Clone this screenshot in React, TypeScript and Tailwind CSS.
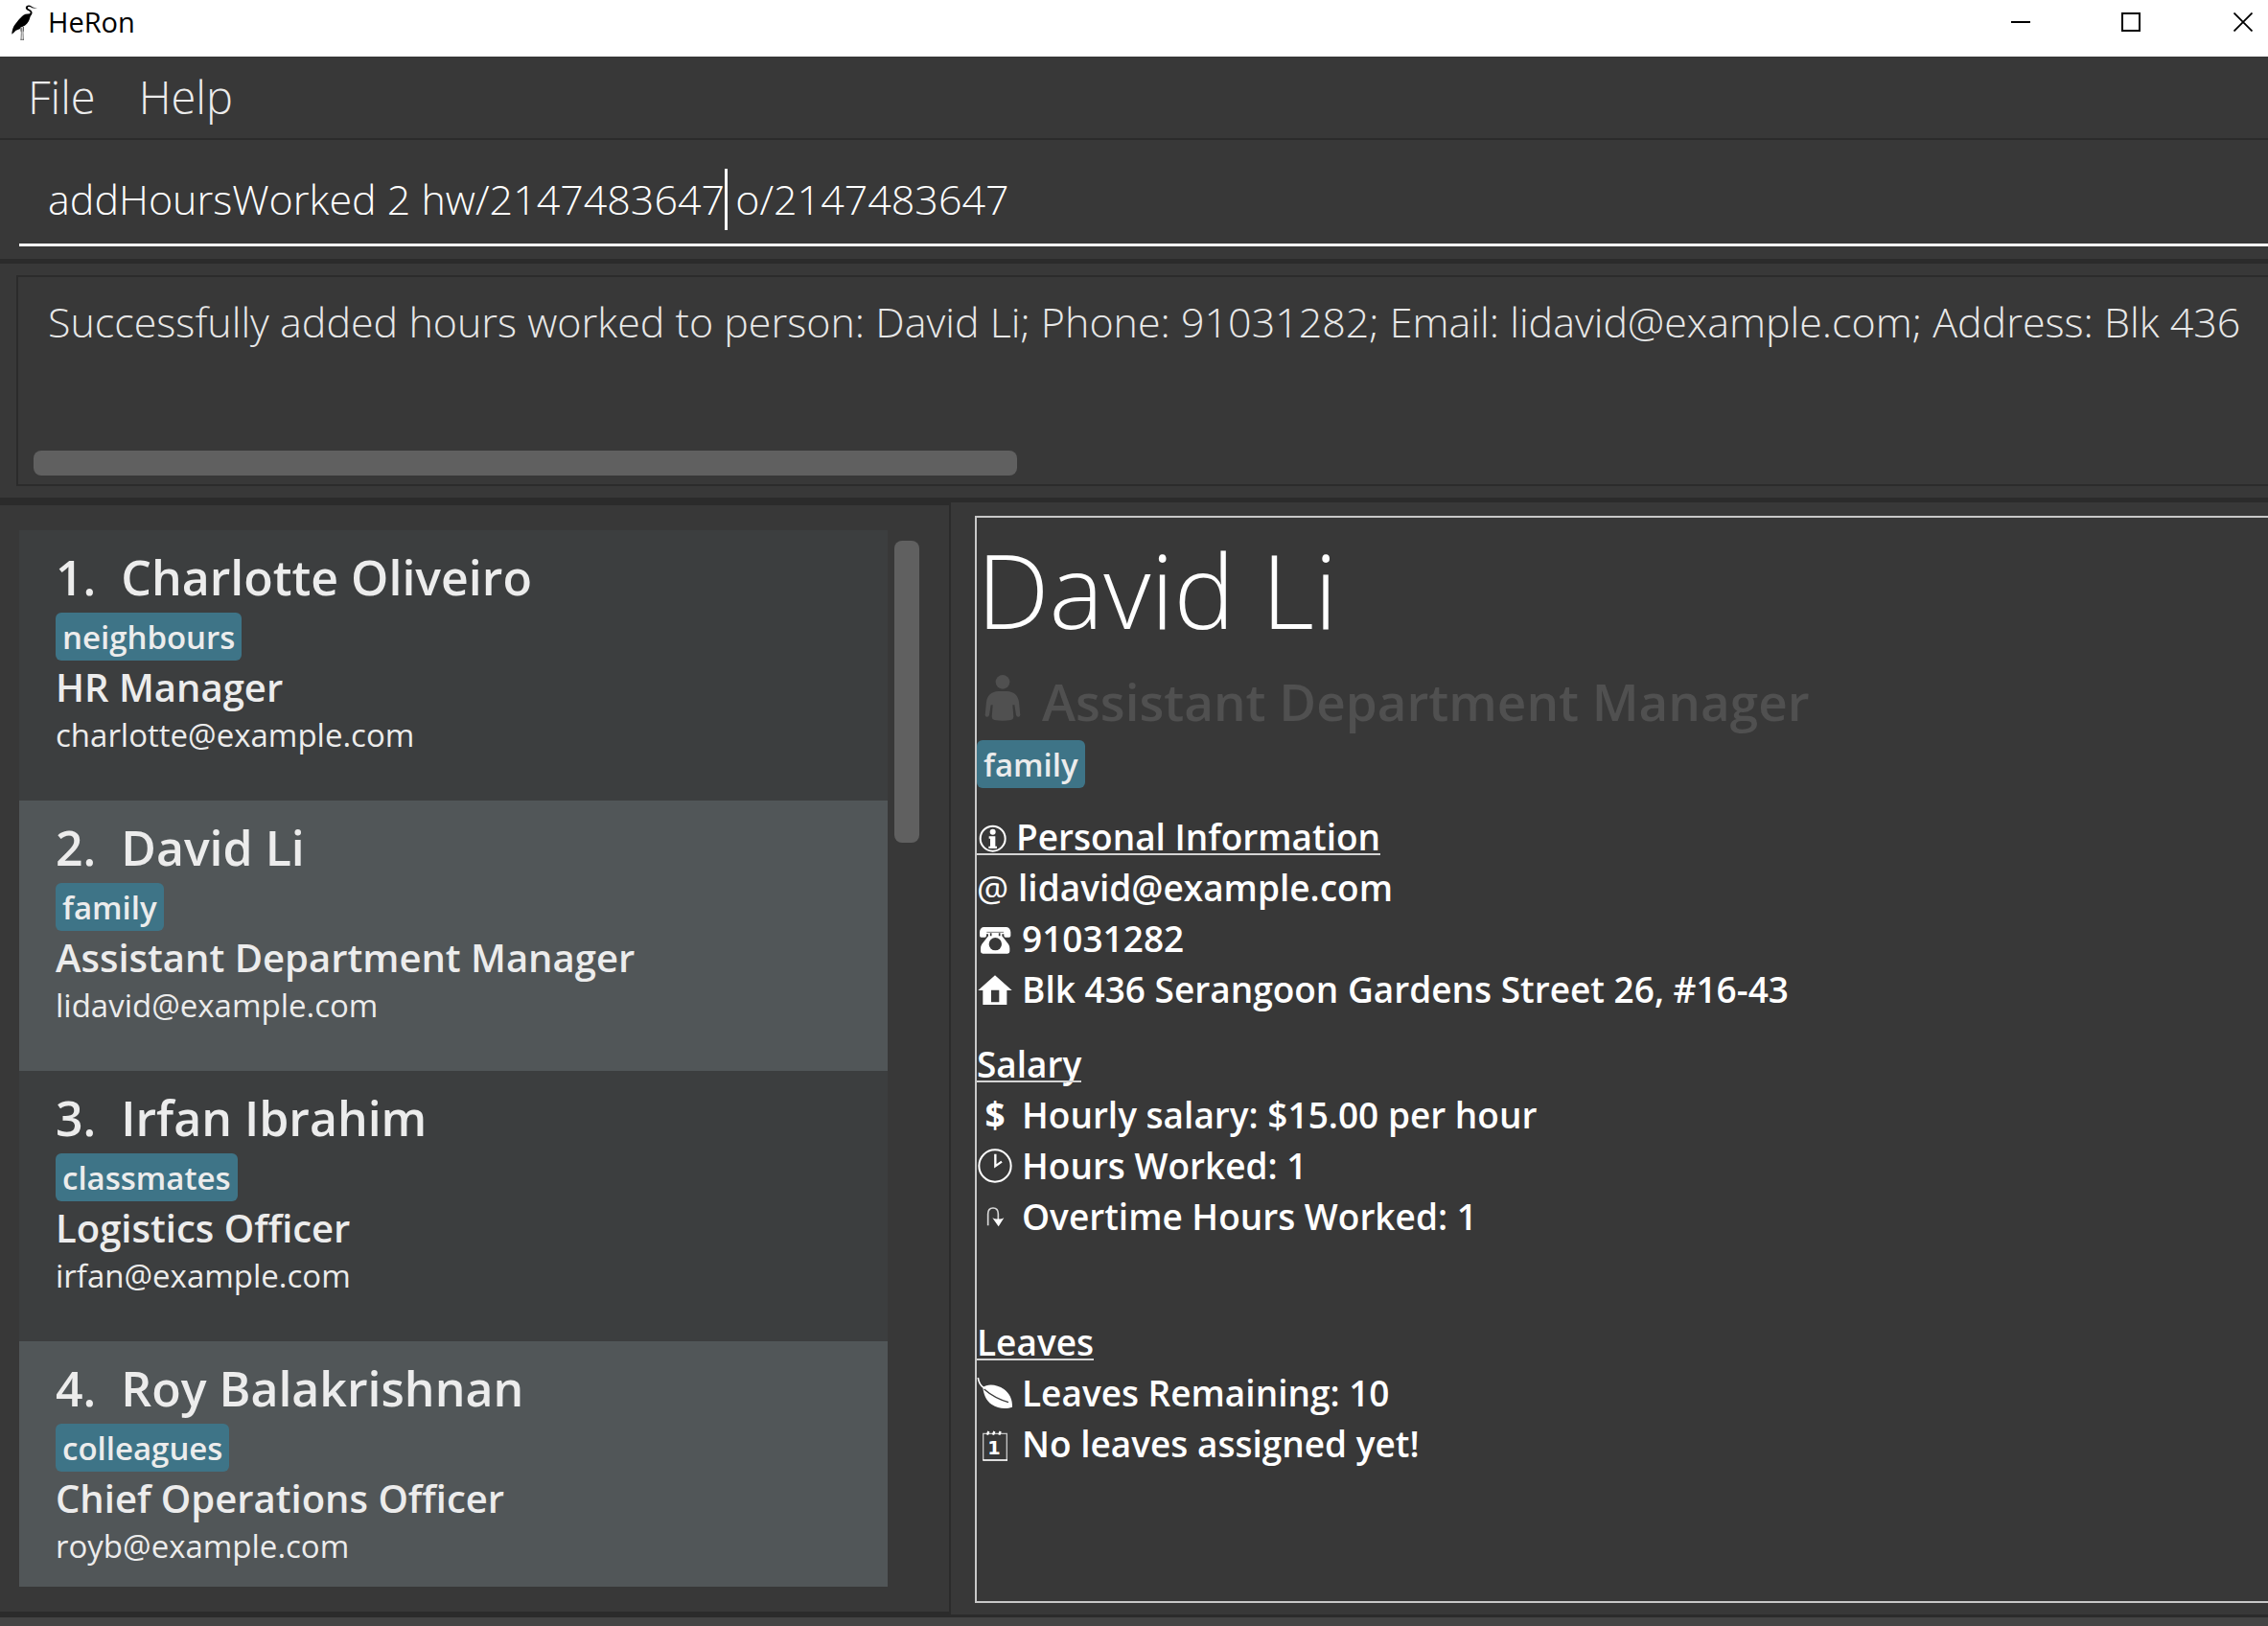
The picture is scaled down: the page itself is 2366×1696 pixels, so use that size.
import type { ReactNode } from "react";

type Person = { name: string; tag: string; role: string; email: string };

const people: Person[] = [
  { name: "Charlotte Oliveiro", tag: "neighbours", role: "HR Manager", email: "charlotte@example.com" },
  { name: "David Li", tag: "family", role: "Assistant Department Manager", email: "lidavid@example.com" },
  { name: "Irfan Ibrahim", tag: "classmates", role: "Logistics Officer", email: "irfan@example.com" },
  { name: "Roy Balakrishnan", tag: "colleagues", role: "Chief Operations Officer", email: "royb@example.com" },
];

function HeronLogo() {
  return (
    <svg viewBox="30 9 96 120" className="h-10 w-8" aria-hidden="true">
      <path
        d="M117 27 L101 22 C97 16 88 14 83 19 C78 24 81 30 88 33 C95 36 97 39 93 43 C84 43 74 45 69 51 C60 60 46 76 42 85 C39 92 37 100 37 107 L44 101 L49 96 C53 94 58 93 62 91 L64 86 C74 84 84 77 90 66 C94 59 93 52 99 46 C103 39 100 33 93 30 C87 28 85 25 88 22 C92 20 96 22 100 25 Z"
        fill="#000"
      />
      <path d="M66 87 L67 103 L66 125 M73 84 L72 103 L73 125" stroke="#777" strokeWidth="3" fill="none" />
      <path d="M66 87 V98 M73 84 V98 M64 124 H75" stroke="#333" strokeWidth="2" fill="none" />
    </svg>
  );
}

function PersonIcon() {
  return (
    <svg viewBox="441 645 114 219" className="ml-2 h-[73px] w-[38px] shrink-0" fill="currentColor" aria-hidden="true">
      <circle cx="498" cy="694" r="22" />
      <path d="M484 723 H512 C532 724 546 735 549 757 L553 797 Q553 803 547 803 Q541 803 540 797 L535 766 H529 L532 803 Q532 810 524 813 Q498 818 472 813 Q464 810 464 803 L467 766 H461 L456 797 Q455 803 449 803 Q443 803 443 797 L447 757 C450 735 464 724 484 723 Z" />
    </svg>
  );
}

function Glyph({ viewBox, children }: { viewBox: string; children: ReactNode }) {
  return (
    <svg viewBox={viewBox} className="h-9 w-9 overflow-visible" fill="none" stroke="none" aria-hidden="true">
      {children}
    </svg>
  );
}

const InfoIcon = () => (
  <Glyph viewBox="57 41 108 108">
    <circle cx="107" cy="100" r="39" stroke="#fff" strokeWidth="6" />
    <circle cx="107" cy="79" r="9" fill="#fff" />
    <path d="M95 93 H115 V124 H120 V131 H94 V124 H99 V100 H95 Z" fill="#fff" />
  </Glyph>
);

const PhoneIcon = () => (
  <Glyph viewBox="57 361 108 108">
    <path
      d="M78 379 H150 Q162 381 163 395 V406 Q163 411 158 411 H147 Q142 411 142 406 V401 H136 V407 L156 432 Q160 438 160 446 V455 Q160 462 153 462 H76 Q69 462 69 455 V446 Q69 438 73 432 L93 407 V401 H87 V406 Q87 411 82 411 H71 Q66 411 66 406 V395 Q67 381 78 379 Z"
      fill="#fff"
    />
    <path d="M101 398 V407 M128 398 V407" stroke="#383838" strokeWidth="5" />
    <path d="M88 395 H141" stroke="#383838" strokeWidth="2" />
    <circle cx="115" cy="432" r="20" fill="#383838" />
  </Glyph>
);

const HomeIcon = () => (
  <Glyph viewBox="57 521 108 108">
    <path fillRule="evenodd" d="M114 531 L167 578 H151 V623 H76 V578 H61 Z M102 577 V615 H127 V577 Z" fill="#fff" />
  </Glyph>
);

const ClockIcon = () => (
  <Glyph viewBox="57 353 108 108">
    <circle cx="114" cy="407" r="50" stroke="#fff" strokeWidth="6" />
    <path d="M115 370 V408 L135 394" stroke="#fff" strokeWidth="7" />
  </Glyph>
);

const HookIcon = () => (
  <Glyph viewBox="57 512 108 108">
    <path d="M92 594 V558 Q92 539 108 539 Q124 539 124 558 V576" stroke="#d8d8d8" strokeWidth="5" />
    <path d="M106 570 Q116 575 124 573 Q133 575 142 570 L125 597 Z" fill="#fff" />
  </Glyph>
);

const LeafIcon = () => (
  <Glyph viewBox="57 194 108 108">
    <path d="M61 200 Q63 220 78 231" stroke="#fff" strokeWidth="5" />
    <path d="M76 230 C90 218 120 220 142 236 C160 250 169 268 168 292 C150 298 124 298 104 284 C86 272 78 252 76 230 Z" fill="#fff" />
    <path d="M80 236 Q112 264 156 277" stroke="#383838" strokeWidth="4" />
  </Glyph>
);

const CalendarIcon = () => (
  <Glyph viewBox="57 353 108 108">
    <path d="M77 459 V375 H151 V459" stroke="#c4c4c4" strokeWidth="4" />
    <path d="M76 458 H153" stroke="#fff" strokeWidth="5" />
    <path d="M90 379 L94 368 M108 379 L112 368 M127 379 L131 368" stroke="#fff" strokeWidth="7" />
    <text x="111" y="439" textAnchor="middle" fontSize="58" fontWeight="700" fontFamily="DejaVu Sans, sans-serif" fill="#fff">
      1
    </text>
  </Glyph>
);

function Tag({ children }: { children: ReactNode }) {
  return (
    <span className="block h-[50px] w-fit rounded-md bg-[#3e7487] px-[7px] text-[33px] leading-[51px] font-semibold text-[#ececec]">
      {children}
    </span>
  );
}

function SectionHeading({ children }: { children: ReactNode }) {
  return (
    <h2 className="relative flex w-fit items-center">
      {children}
      <span className="absolute inset-x-0 bottom-[7px] h-0.5 bg-[#d4d4d4]" />
    </h2>
  );
}

function DetailRow({ icon, children }: { icon: ReactNode; children: ReactNode }) {
  return (
    <li className="flex items-center">
      <span className="flex w-[47px] shrink-0">{icon}</span>
      {children}
    </li>
  );
}

function PersonCard({ person, index }: { person: Person; index: number }) {
  return (
    <li className="h-[282px] bg-[#3c3e3f] pt-[15px] pl-[38px] text-[#ececec] even:bg-[#515658]">
      <h3 className="text-[50px] leading-[68px] font-semibold whitespace-pre">{`${index}.  ${person.name}`}</h3>
      <div className="mt-[3px]">
        <Tag>{person.tag}</Tag>
      </div>
      <p className="text-[40px] leading-[55px] font-semibold">{person.role}</p>
      <p className="text-[33px] leading-[45px]">{person.email}</p>
    </li>
  );
}

export default function App() {
  return (
    <div className="flex h-screen flex-col overflow-hidden bg-[#383838] font-['Open_Sans',sans-serif] text-white">
      <header className="flex h-[59px] shrink-0 items-start bg-white text-black">
        <div className="flex h-[46px] flex-1 items-center pl-2.5">
          <HeronLogo />
          <h1 className="ml-2 text-[29px] leading-[38px]">HeRon</h1>
        </div>
        <button aria-label="Minimize" className="flex h-[46px] w-[115px] items-center justify-center">
          <span className="h-0.5 w-5 bg-black" />
        </button>
        <button aria-label="Maximize" className="flex h-[46px] w-[116px] items-center justify-center">
          <span className="size-5 border-2 border-black" />
        </button>
        <button aria-label="Close" className="flex h-[46px] w-[85px] items-center pl-[49px]">
          <svg viewBox="0 0 20 20" className="size-5" stroke="#000" strokeWidth="1.8" aria-hidden="true">
            <path d="M0.5 0.5 L19.5 19.5 M19.5 0.5 L0.5 19.5" />
          </svg>
        </button>
      </header>

      <nav className="flex h-[87px] shrink-0 items-center gap-[45px] border-b-2 border-[#2b2b2b] pl-[29px] text-[47px] font-light text-[#ececec]">
        <button>File</button>
        <button>Help</button>
      </nav>

      <div className="shrink-0 border-b-[5px] border-[#2b2b2b] pt-3.5 pb-[13px] pl-5">
        <div className="relative">
          <input
            aria-label="Command"
            defaultValue="addHoursWorked 2 hw/2147483647 o/2147483647"
            className="block h-[97px] w-full border-b-[3px] border-white bg-transparent pl-[30px] text-[43px] font-light text-white outline-none"
          />
          <span className="absolute top-4 left-[736px] h-16 w-[3px] bg-white" />
        </div>
      </div>

      <section className="shrink-0 border-b-[5px] border-[#2b2b2b] py-3 pl-[17px]">
        <div className="flex h-[220px] flex-col justify-between overflow-hidden border-y-2 border-l-2 border-[#2b2b2b] pt-[17px] pb-[9px]">
          <output className="pl-[31px] text-[43px] leading-[59px] font-light whitespace-nowrap text-[#e8e8e8]">
            Successfully added hours worked to person: David Li; Phone: 91031282; Email: lidavid@example.com; Address: Blk 436
          </output>
          <div className="ml-4 h-[26px] w-[1026px] rounded-lg bg-[#606060]" />
        </div>
      </section>

      <main className="flex min-h-0 flex-1">
        <section className="flex w-[992px] shrink-0 gap-[7px] border-t-[3px] border-r-2 border-b-[3px] border-[#2b2b2b] pt-[26px] pr-[31px] pb-[26px] pl-5">
          <ol className="min-w-0 flex-1 overflow-hidden">
            {people.map((p, i) => (
              <PersonCard key={p.name} person={p} index={i + 1} />
            ))}
          </ol>
          <div className="w-[26px] shrink-0 pt-[11px]">
            <div className="h-[315px] rounded-lg bg-[#606060]" />
          </div>
        </section>

        <section className="min-w-0 flex-1 pt-3.5 pb-3 pl-[25px]">
          <article className="h-full overflow-hidden border-y-2 border-l-2 border-[#c8c8c8] text-[37px] leading-[53px] font-semibold">
            <h2 className="text-[107px] leading-[149px] font-light">David Li</h2>
            <p className="mt-1.5 flex items-center text-[53px] leading-[73px] text-[#505050]">
              <PersonIcon />
              <span className="ml-[22px]">Assistant Department Manager</span>
            </p>
            <div className="mt-1">
              <Tag>family</Tag>
            </div>

            <div className="mt-6">
              <SectionHeading>
                <span className="flex w-[41px]">
                  <InfoIcon />
                </span>
                Personal Information
              </SectionHeading>
              <ul>
                <li className="flex">
                  <span className="w-[43px] font-normal">@</span>
                  lidavid@example.com
                </li>
                <DetailRow icon={<PhoneIcon />}>91031282</DetailRow>
                <DetailRow icon={<HomeIcon />}>Blk 436 Serangoon Gardens Street 26, #16-43</DetailRow>
              </ul>
            </div>

            <div className="mt-[25px]">
              <SectionHeading>Salary</SectionHeading>
              <ul>
                <DetailRow icon={<span className="w-[38px] text-center font-bold">$</span>}>Hourly salary: $15.00 per hour</DetailRow>
                <DetailRow icon={<ClockIcon />}>Hours Worked: 1</DetailRow>
                <DetailRow icon={<HookIcon />}>Overtime Hours Worked: 1</DetailRow>
              </ul>
            </div>

            <div className="mt-[78px]">
              <SectionHeading>Leaves</SectionHeading>
              <ul>
                <DetailRow icon={<LeafIcon />}>Leaves Remaining: 10</DetailRow>
                <DetailRow icon={<CalendarIcon />}>No leaves assigned yet!</DetailRow>
              </ul>
            </div>
          </article>
        </section>
      </main>

      <footer className="h-3 shrink-0 border-t-[3px] border-[#2b2b2b] bg-[#444444]" />
    </div>
  );
}
